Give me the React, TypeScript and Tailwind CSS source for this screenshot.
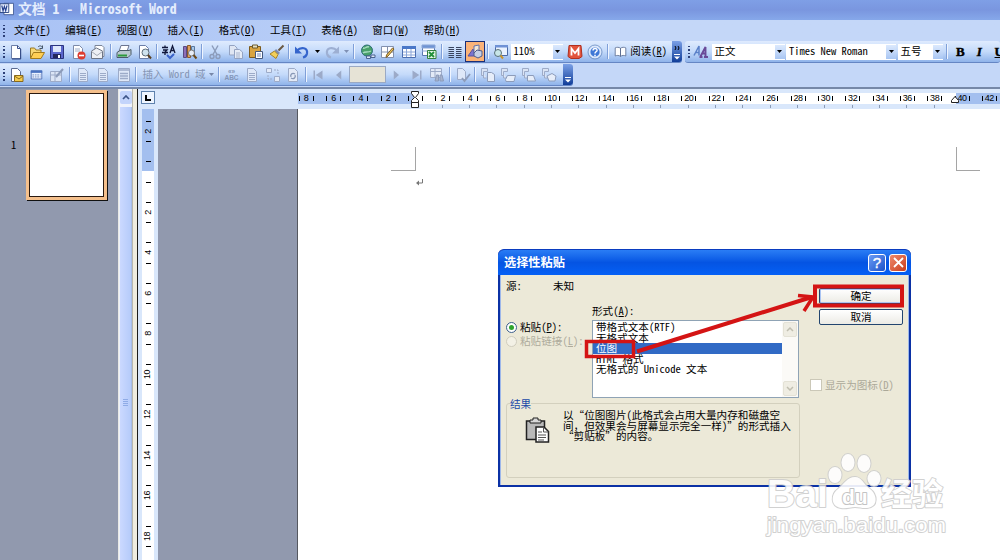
import React from 'react';
import { clsx } from 'clsx';

type IconProps = { children: React.ReactNode; size?: number; className?: string };

function Icon({ children, size = 16, className }: IconProps) {
  return (
    <svg
      width={size}
      height={size}
      viewBox="0 0 16 16"
      fill="none"
      className={clsx('shrink-0', className)}
    >
      {children}
    </svg>
  );
}

// Latin runs use the half-width forms; "_X" marks an access key
function Text({ value, className }: { value: string; className?: string }) {
  const runs = value.match(/[\x20-\x7e]+|[^\x20-\x7e]+/g) ?? [];
  return (
    <span className={clsx('whitespace-pre', className)}>
      {runs.map((run, i) => {
        if (run.charCodeAt(0) > 0x7e) return <span key={i}>{run}</span>;
        const [before, after] = run.split('_');
        return (
          <span key={i} className="[font-feature-settings:'hwid']">
            {before}
            {after && (
              <>
                <span className="underline underline-offset-1">{after[0]}</span>
                {after.slice(1)}
              </>
            )}
          </span>
        );
      })}
    </span>
  );
}

const Slot = ({ children }: { children: React.ReactNode }) => (
  <div className="flex w-[20.5px] shrink-0 items-center justify-center">
    {children}
  </div>
);

const Sep = ({ className }: { className?: string }) => (
  <div className={clsx('flex w-[4.75px] shrink-0 justify-center', className)}>
    <div className="h-[15px] w-px bg-[#7f9fd8]" />
    <div className="h-[15px] w-px bg-[#eff5ff]" />
  </div>
);

const Grip = () => (
  <div className="flex w-[6px] shrink-0 flex-col items-end gap-[2px] pr-px">
    {[0, 1, 2, 3].map((n) => (
      <div key={n} className="h-[1.5px] w-[2px] bg-[#2c3f77]" />
    ))}
  </div>
);

const Caret = ({ color = '#000' }: { color?: string }) => (
  <svg width="5" height="3" viewBox="0 0 5 3">
    <path d="M0 0h5L2.5 3z" fill={color} />
  </svg>
);

const EndCap = ({ more }: { more?: boolean }) => (
  <div className="flex h-full w-[10px] shrink-0 flex-col items-center justify-end gap-[4px] rounded-r-[3px] bg-linear-to-b from-[#7ba0e6] to-[#103d99] pb-[2px]">
    {more && (
      <svg width="6" height="4" viewBox="0 0 6 4">
        <path d="M1 0l1 2-1 2M4 0l1 2-1 2" stroke="#000" fill="none" />
      </svg>
    )}
    <svg width="6" height="6" viewBox="0 0 6 6">
      <path d="M0 .5h6" stroke="#fff" />
      <path d="M0 2.5h6l-3 3z" fill="#fff" />
    </svg>
  </div>
);

const PAGE = 'M3.5 1.5h6l3 3v10h-9z';

const NewIcon = () => (
  <Icon>
    <path d={PAGE} fill="#fff" stroke="#6d7fa8" />
    <path d="M9.5 1.5v3h3" stroke="#39508c" />
    <path d="M12.7 5v10H4" stroke="#2b4380" />
  </Icon>
);

const OpenIcon = () => (
  <Icon>
    <path d="M1.5 14V4h4l1.5 2h5v3" fill="#f7d774" stroke="#9a7a25" />
    <path d="M1.5 14.5l3-6h11l-3.5 6z" fill="#ffcf55" stroke="#a27a1a" />
    <path d="M9 3c2-2 4-1 4.5 1M13.5 1.5v3h-3" stroke="#456" />
  </Icon>
);

const SaveIcon = () => (
  <Icon>
    <path d="M1.5 1.5h13v13h-13z" fill="#5a66cc" stroke="#2b347f" />
    <path d="M4 2h8v6H4z" fill="#dfe8fb" />
    <path d="M4 10h8v4H4z" fill="#23275c" />
    <path d="M9 11h2v3H9z" fill="#fff" />
  </Icon>
);

const PermissionIcon = () => (
  <Icon>
    <path d={PAGE} fill="#fff" stroke="#7d8aa8" />
    <path d="M5 5h5M5 7h5" stroke="#a0aec8" />
    <circle cx="11.5" cy="11.5" r="4" fill="#dc3c32" />
    <path d="M9 11.5h5" stroke="#fff" strokeWidth="1.6" />
  </Icon>
);

const MailIcon = () => (
  <Icon>
    <path d="M5 1.5h7l2 2v9H5z" fill="#fff" stroke="#7b8598" />
    <path d="M1.5 7l5-3 6 3v7.5h-11z" fill="#eef0f4" stroke="#6e7686" />
    <path d="M1.5 7.5l5.5 4 5.5-4" stroke="#a4aab5" />
  </Icon>
);

const PrintIcon = () => (
  <Icon>
    <path d="M5 1.5h8l-2 6H3z" fill="#fff" stroke="#6b7590" />
    <path d="M1 8.5l3-2h9l2-1v5l-3 3H1z" fill="#b9c8cf" stroke="#4a5a66" />
    <path d="M2 11.5h9" stroke="#2c9a3c" strokeWidth="2" />
  </Icon>
);

const PreviewIcon = () => (
  <Icon>
    <path d={PAGE} fill="#fff" stroke="#6b7ea8" />
    <circle cx="9.5" cy="8.5" r="3.5" fill="#cfe3ee" stroke="#5e6d7a" />
    <path d="M12 11l3 3.5" stroke="#5b4020" strokeWidth="2" />
  </Icon>
);

const SpellIcon = () => (
  <Icon>
    <path
      d="M1 3.5h6M4 1.5v2M2 6h4L4 8M1 8.5h6M4 8v3M9 9l2.5-7L14 9M10 6.5h3"
      stroke="#10173a"
      strokeWidth="1.3"
    />
    <path d="M6 11l3 3 4-4" stroke="#3a62c8" strokeWidth="2" />
  </Icon>
);

const ResearchIcon = () => (
  <Icon>
    <path d="M1.5 2.5h3v11h-3z" fill="#8d6fb8" stroke="#5a4a80" />
    <path d="M5.5 1.5h3v12h-3z" fill="#e2a05a" stroke="#8a5a2a" />
    <path d="M9.5 2.5h3v8h-3z" fill="#a9c9ea" stroke="#5878a0" />
    <circle cx="9.5" cy="9" r="3" fill="#e8eef8" stroke="#777" />
    <path d="M11.5 11l3 3.5" stroke="#6b4a18" strokeWidth="2" />
  </Icon>
);

const CutIcon = () => (
  <Icon>
    <path d="M5 1.5l5 9M11 1.5l-5 9" stroke="#8b9bb9" strokeWidth="1.4" />
    <circle cx="5" cy="12.5" r="2" stroke="#8b9bb9" strokeWidth="1.4" />
    <circle cx="11" cy="12.5" r="2" stroke="#8b9bb9" strokeWidth="1.4" />
  </Icon>
);

const CopyIcon = () => (
  <Icon>
    <path d="M1.5 1.5h5l2.5 2.5v7h-7.5z" fill="#dfe6f3" stroke="#94a3c2" />
    <path d="M6.5 5.5h5l3 2.5v6.5h-8z" fill="#e6ecf7" stroke="#94a3c2" />
    <path d="M8 9h4M8 11h4M8 13h4" stroke="#a7b3cc" />
  </Icon>
);

const PasteIcon = () => (
  <Icon>
    <path d="M1.5 2.5h11v11h-11z" fill="#d9a441" stroke="#7c5a1c" />
    <path d="M4.5 1h5v3h-5z" fill="#e8e0c0" stroke="#6b5a2c" />
    <path d="M7.5 7.5h7v7h-7z" fill="#fff" stroke="#44597e" />
    <path d="M9 10h4M9 12h4" stroke="#7088b8" />
  </Icon>
);

const BrushIcon = () => (
  <Icon>
    <path d="M14.5 1.5l-5 5" stroke="#6b5840" strokeWidth="2" />
    <path d="M7 5l4 4-2 1.5L5.5 7z" fill="#7e8ab0" />
    <path d="M5.5 7L9 10.5 7 14.5 1 10z" fill="#f3cf58" stroke="#a5832a" />
  </Icon>
);

const UndoIcon = ({ color }: { color: string }) => (
  <Icon>
    <path d="M3 6.5c4-4 11-3 10 3-.4 2-2 3.5-4 4" stroke={color} strokeWidth="2.2" />
    <path d="M1 2.5v7h7z" fill={color} />
  </Icon>
);

const LinkIcon = () => (
  <Icon>
    <circle cx="7" cy="6.5" r="5.5" fill="#49a069" stroke="#2d6e78" />
    <path d="M3 4c3 1 3-2 6-1M3 9c2-2 5 0 8-2" stroke="#a5dcc0" strokeWidth="1.5" />
    <path d="M6.5 12h4v2.5h-4zM11 11h4v2.5h-4z" fill="#dce6f6" stroke="#4b638f" />
  </Icon>
);

const BorderIcon = () => (
  <Icon>
    <path d="M1.5 2.5h12v11h-12zM7.5 2.5v11M1.5 8h12" fill="#fff" stroke="#8391ad" />
    <path d="M14 5l-6 7-2 1.5.5-2.5 6-7z" fill="#f0c75e" stroke="#7c5c25" />
  </Icon>
);

const TableIcon = () => (
  <Icon>
    <path d="M1.5 2.5h13v11h-13z" fill="#fff" stroke="#4d6fb0" />
    <path d="M1 2h14v3H1z" fill="#4a78c8" />
    <path d="M5.5 5v8M10 5v8M2 8h12M2 11h12" stroke="#8ba6d8" />
  </Icon>
);

const ExcelIcon = () => (
  <Icon>
    <path d="M1.5 1.5h12v10h-12z" fill="#fff" stroke="#5b78b0" />
    <path d="M1 1h13v3H1zM1 7h12" fill="#6f94d4" stroke="#8ba6d8" />
    <path d="M6.5 6.5H15v8H6.5z" fill="#e5f5e5" stroke="#34803e" />
    <path d="M8 8l5 5M13 8l-5 5" stroke="#23903a" strokeWidth="1.8" />
  </Icon>
);

const ColumnsIcon = () => (
  <Icon>
    <path
      d="M1.5 3.5H7M1.5 5.5H7M1.5 7.5H7M1.5 9.5H7M1.5 11.5H7M1.5 13.5H7M9 3.5h5.5M9 5.5h5.5M9 7.5h5.5M9 9.5h5.5M9 11.5h5.5M9 13.5h5.5"
      stroke="#39445e"
      strokeWidth="1.2"
    />
  </Icon>
);

const DrawIcon = () => (
  <Icon>
    <path d="M1 12l5-7 2 7z" fill="#7b74d0" stroke="#5953a0" />
    <path d="M7 2l5-1v7l-5 1z" fill="#f4e7d6" stroke="#6073ac" />
    <path d="M7 9l3-3 5 1v5l-4 2-4-2z" fill="#c5cfe6" stroke="#4e5d8c" />
  </Icon>
);

const MapIcon = () => (
  <Icon>
    <path d="M3.5 1.5h12v10h-12z" fill="#eaf2ff" stroke="#4c6aa4" />
    <path d="M3 1h13v2.5H3z" fill="#6f92d6" />
    <circle cx="6" cy="9" r="3.5" fill="#c8e6e8" stroke="#587078" />
    <path d="M8.5 11.5l2.5 3" stroke="#c9952c" strokeWidth="2" />
  </Icon>
);

const MathIcon = () => (
  <Icon>
    <path d="M2 1.5h12l1 11-3 2H4l-3-2z" fill="#e2533c" stroke="#b03020" />
    <path d="M4.5 11.5v-7L8 9l3.5-4.5v7" stroke="#fff" strokeWidth="1.8" />
  </Icon>
);

const HelpIcon = () => (
  <Icon>
    <circle cx="8" cy="8" r="5.5" fill="#3f78d6" stroke="#dce8fb" strokeWidth="1.8" />
    <circle cx="8" cy="8" r="7" stroke="#5b7fb8" strokeWidth=".7" />
    <path d="M6 6.5c0-3 4.5-2.500 4 0-.3 1.300-2 1.300-2 3M8 10.700v1.600" stroke="#fff" strokeWidth="1.5" />
  </Icon>
);

const BookIcon = () => (
  <Icon size={13}>
    <path
      d="M1.5 3.5c2-1 4.500-1 6.500.5v10c-2-1.500-4.500-1.500-6.500-.5zM14.500 3.500c-2-1-4.500-1-6.500.5v10c2-1.500 4.500-1.500 6.500-.5z"
      fill="#fff"
      stroke="#596a8e"
    />
  </Icon>
);

const StylesIcon = () => (
  <Icon>
    <path d="M1 11.5L6 2v9.500M3 8.500h3" stroke="#5a80c8" strokeWidth="1.5" />
    <path d="M7.5 12.5L12.500 3v10M9.500 9.500h3M6.500 13h3M11 13h4" stroke="#6a4a98" strokeWidth="1.9" />
  </Icon>
);

const MergeMainIcon = () => (
  <Icon>
    <path d={PAGE} fill="#fff" stroke="#5a6a90" />
    <path d="M6.5 8.5H15v6H6.5z" fill="#f6cd4e" stroke="#8a6a1c" />
    <path d="M6.5 9l4.500 3 4-3" stroke="#8a6a1c" />
  </Icon>
);

const SourceIcon = () => (
  <Icon size={13}>
    <path d="M1.5 3.5h13v10h-13z" fill="#eaf1ff" stroke="#4868ac" />
    <path d="M1 3h14v3H1z" fill="#4a72c0" />
    <path d="M3 8.5h10M3 11h10" stroke="#5a78b0" strokeDasharray="2 1" />
  </Icon>
);

const GRAY = '#9dabc8';

const GrayEditIcon = () => (
  <Icon>
    <path d="M1.5 4.5h11v10h-11zM2 8h10M6 5v9" fill="#dce5f5" stroke={GRAY} />
    <path d="M14 2L7 10" stroke="#8c9bb9" strokeWidth="2" />
  </Icon>
);

const GrayDocIcon = () => (
  <Icon>
    <path d={PAGE} fill="#dfe8f8" stroke={GRAY} />
    <path d="M5 6.5h6M5 8.5h6M5 10.5h6M5 12.5h6" stroke={GRAY} />
  </Icon>
);

const GrayListIcon = () => (
  <Icon>
    <path d="M2.5 1.5h11v13h-11z" fill="#dfe8f8" stroke={GRAY} />
    <path d="M3 3h10M4 6.5h8M4 9h8M4 11.5h8" stroke={GRAY} strokeWidth="1.3" />
  </Icon>
);

const FieldCodeIcon = () => (
  <div className="flex flex-col items-center font-['Liberation_Sans',sans-serif] text-[6.5px] leading-[6px] font-bold text-[#8496b8]">
    <span>«»</span>
    <span>ABC</span>
  </div>
);

const GrayNodesIcon = () => (
  <Icon>
    <path d="M1.5 1.5h5v4h-5zM9.5 9.5h5v5h-5z" fill="#e3eaf7" stroke={GRAY} />
    <path d="M9 3h4v4M3 8v4h4" stroke={GRAY} strokeDasharray="2 1" />
  </Icon>
);

const GrayRefreshIcon = () => (
  <Icon>
    <path d={PAGE} fill="#e3eaf7" stroke={GRAY} />
    <path d="M10 7c-3-2-5 1-4 3M6 11c3 2 5-1 4-3" stroke="#8797b5" strokeWidth="1.3" />
  </Icon>
);

const GrayFindIcon = () => (
  <Icon>
    <path d="M1.5 1.5h11v9h-11zM1 4.5h11M6 2v8" fill="#e3eaf7" stroke={GRAY} />
    <path d="M6 14l1.500-6h2v6zM11 14V8h2l1.500 6z" fill="#a6b3cd" stroke="#8b9aba" />
  </Icon>
);

const GrayCheckIcon = () => (
  <Icon>
    <path d="M2.5 1.5h5l3 3v8h-8z" fill="#dfe8f8" stroke={GRAY} />
    <path d="M7 11l2.500 3L15 7" stroke="#8d9cba" strokeWidth="1.8" />
  </Icon>
);

const GrayMergeIcon = ({ d }: { d: string }) => (
  <Icon>
    <path d="M1.5 1.5h6v3h-4v4h-2zM3.5 5v6h3" fill="#dbe4f4" stroke={GRAY} />
    <path d={d} fill="#e6edf9" stroke="#8d9cba" />
  </Icon>
);

const Triangle = ({ d }: { d: string }) => (
  <Icon size={12}>
    <path d={d} fill="#9caac8" />
  </Icon>
);

function Combo({ value, className }: { value: string; className: string }) {
  return (
    <div
      className={clsx(
        'flex h-[16px] shrink-0 items-center justify-between bg-white pl-[3px]',
        className
      )}
    >
      <Text value={value} className="pb-px" />
      <div className="flex h-[14px] w-[10px] items-center justify-center bg-linear-to-b from-[#dce9fd] to-[#a9c6f3]">
        <Caret />
      </div>
    </div>
  );
}

const BAR =
  'flex h-[22px] items-center bg-linear-to-b from-[#dfebfe] via-[#c4dafa] to-[#8fb3ea] border-b border-[#6586c4] rounded-r-[3px]';

const MENUS = [
  '文件(_F)',
  '编辑(_E)',
  '视图(_V)',
  '插入(_I)',
  '格式(_O)',
  '工具(_T)',
  '表格(_A)',
  '窗口(_W)',
  '帮助(_H)',
];

function StandardBar() {
  return (
    <div className={clsx(BAR, 'w-[682px] shrink-0')}>
      <Grip />
      {[NewIcon, OpenIcon, SaveIcon, PermissionIcon, MailIcon].map((I, n) => (
        <Slot key={n}><I /></Slot>
      ))}
      <Sep />
      <Slot><PrintIcon /></Slot>
      <Slot><PreviewIcon /></Slot>
      <Sep />
      <Slot><SpellIcon /></Slot>
      <Slot><ResearchIcon /></Slot>
      <Sep />
      {[CutIcon, CopyIcon, PasteIcon, BrushIcon].map((I, n) => (
        <Slot key={n}><I /></Slot>
      ))}
      <Sep />
      <Slot><UndoIcon color="#3565cc" /></Slot>
      <div className="flex w-[10px] shrink-0 justify-center"><Caret /></div>
      <Slot>
        <div className="-scale-x-100"><UndoIcon color="#9dafd2" /></div>
      </Slot>
      <div className="flex w-[8px] shrink-0 justify-center"><Caret color="#7f90b4" /></div>
      <Sep className="w-[7px]" />
      {[LinkIcon, BorderIcon, TableIcon, ExcelIcon].map((I, n) => (
        <Slot key={n}><I /></Slot>
      ))}
      <Sep />
      <Slot><ColumnsIcon /></Slot>
      <div className="flex size-[20.5px] shrink-0 items-center justify-center border border-[#1a2f78] bg-[#fbb378]">
        <DrawIcon />
      </div>
      <Sep />
      <Slot><MapIcon /></Slot>
      <Combo value="110%" className="w-[52px]" />
      <div className="w-[2px] shrink-0" />
      <Slot><MathIcon /></Slot>
      <Slot><HelpIcon /></Slot>
      <Sep />
      <div className="flex w-[62px] items-center gap-[3px] pl-[4px]">
        <BookIcon />
        <Text value="阅读(_R)" />
      </div>
      <div className="ml-auto h-full"><EndCap more /></div>
    </div>
  );
}

function FormatBar() {
  return (
    <div className={clsx(BAR, 'ml-[3px] min-w-0 flex-1 overflow-hidden rounded-l-[3px]')}>
      <Grip />
      <Slot><StylesIcon /></Slot>
      <Combo value="正文" className="w-[73px]" />
      <Combo value="Times New Roman" className="ml-[1.5px] w-[110px]" />
      <Combo value="五号" className="ml-[1.5px] w-[45px]" />
      <Sep className="mx-[2px]" />
      <div className="flex font-['Liberation_Serif',serif] text-[13px] [-webkit-text-stroke:0.4px_#000]">
        <span className="w-[18px] shrink-0 text-center font-bold">B</span>
        <span className="w-[20px] shrink-0 text-center font-bold italic">I</span>
        <span className="w-[20px] shrink-0 text-center font-bold underline">U</span>
      </div>
    </div>
  );
}

function MergeBar() {
  return (
    <div className={clsx(BAR, 'w-[573px]')}>
      <Grip />
      <Slot><MergeMainIcon /></Slot>
      <Slot><SourceIcon /></Slot>
      <Slot><GrayEditIcon /></Slot>
      <Sep />
      <Slot><GrayDocIcon /></Slot>
      <Slot><GrayDocIcon /></Slot>
      <Slot><GrayListIcon /></Slot>
      <Sep />
      <div className="flex w-[78px] shrink-0 items-center gap-[3px] pl-[4px] text-[#8494b3]">
        <Text value="插入 Word 域" />
        <Caret color="#7787a8" />
      </div>
      <Sep />
      <Slot><FieldCodeIcon /></Slot>
      <Slot><GrayDocIcon /></Slot>
      <Slot><GrayNodesIcon /></Slot>
      <Slot><GrayRefreshIcon /></Slot>
      <Sep />
      <Slot><Triangle d="M2 2h2v12H2zM14 2v12L5 8z" /></Slot>
      <Slot><Triangle d="M11 2v12L4 8z" /></Slot>
      <div className="h-[17px] w-[37px] shrink-0 border border-[#9aa9c4] bg-[#e6e3d6]" />
      <Slot><Triangle d="M5 2v12l7-6z" /></Slot>
      <Slot><Triangle d="M12 2h2v12h-2zM2 2v12l9-6z" /></Slot>
      <Slot><GrayFindIcon /></Slot>
      <Sep />
      <Slot><GrayCheckIcon /></Slot>
      <Sep />
      <Slot><GrayMergeIcon d="M7.5 5.5h4l3 2v7h-7z" /></Slot>
      <Slot><GrayMergeIcon d="M5.5 12.5l2-4h8l-1.500 6H6z" /></Slot>
      <Slot><GrayMergeIcon d="M6.5 8.5h6l2 5.500h-8z" /></Slot>
      <Slot><GrayMergeIcon d="M6 9l5-2.500 4 2.500-1 5H8z" /></Slot>
      <div className="ml-auto h-full"><EndCap /></div>
    </div>
  );
}

const H_LABELS = [8, 6, 4, 2, 0, ...Array.from({ length: 21 }, (_, i) => 2 * i + 2)];
const V_LABELS = [2, 0, 2, 4, 6, 8, 10, 12, 14, 16, 18];

function HorizontalRuler() {
  return (
    <div className="relative h-[20px] overflow-hidden bg-[#d9e7fb] pt-[4px]">
      <div className="h-[11px] bg-[linear-gradient(to_right,#a3bfef_0_117px,#fff_117px_658px,#a3bfef_658px)]">
        <div className="-ml-[5.5px] flex h-[11px] items-center font-['Liberation_Sans',sans-serif] text-[9px] leading-none">
          {H_LABELS.map((n, i) => (
            <div
              key={i}
              className="flex w-[27.34px] shrink-0 items-center justify-center"
            >
              <div className="flex w-[15px] items-center justify-between">
                <div className="h-[5px] w-px shrink-0 bg-black" />
                <span className="-mx-1 tracking-[-0.4px]">{n || ''}</span>
                <div className="h-[5px] w-px shrink-0 bg-black" />
              </div>
            </div>
          ))}
        </div>
      </div>
      <div className="flex h-[5px] items-center pl-[131px]">
        {H_LABELS.slice(5, 24).map((n) => (
          <div key={n} className="flex w-[27.34px] shrink-0 justify-center pr-px">
            <div className="h-[3px] w-px bg-[#8b9bb5]" />
          </div>
        ))}
      </div>
      {/* Indent markers */}
      <svg className="absolute top-px left-[112px]" width="11" height="19" viewBox="0 0 11 19">
        <path d="M1.5 1.5h7v2l-3 4 3 3v2h-7v-2l3-3-3-4zM1.5 12.5h7v5h-7z" fill="#fff" stroke="#222" />
      </svg>
      <svg className="absolute top-[6px] left-[652px]" width="10" height="9" viewBox="0 0 10 9">
        <path d="M1.5 7.5v-2l3.500-4 3.500 4v2z" fill="#fff" stroke="#222" />
      </svg>
    </div>
  );
}

function VerticalRuler() {
  return (
    <div className="flex w-[20px] shrink-0 flex-col items-center bg-[#d9e7fb] pt-[2px]">
      <div className="mb-[5px] flex h-[13px] w-[14px] shrink-0 items-center justify-center border border-[#5f82ad] bg-[#eef5ff]">
        <svg width="6" height="6" viewBox="0 0 6 6">
          <path d="M1 0v5h5" stroke="#000" strokeWidth="2" fill="none" />
        </svg>
      </div>
      <div className="min-h-0 w-[12px] flex-1 overflow-hidden bg-[linear-gradient(to_bottom,#a3bfef_0_62px,#fff_62px)] pt-[2px] font-['Liberation_Sans',sans-serif] text-[9px] leading-none">
        {V_LABELS.map((n, i) => (
          <div key={i} className="flex h-[40.5px] flex-col items-center justify-center">
            <div className="flex h-[21.5px] flex-col items-center justify-between">
              <div className="h-px w-[5px] bg-black" />
              <span className="-rotate-90 tracking-[-0.4px]">{n || ''}</span>
              <div className="h-px w-[5px] bg-black" />
            </div>
          </div>
        ))}
      </div>
    </div>
  );
}

function ThumbnailPane() {
  return (
    <div className="flex w-[118px] shrink-0 bg-[#9199ae] pt-[1px]">
      <div className="w-[26px] pt-[50px] pl-[11px]">
        <Text value="1" />
      </div>
      <div className="h-[110px] w-[81px] bg-[#f5c08c] p-[3px] shadow-[1px_1px_0_#111]">
        <div className="h-full border border-[#2a1a10] bg-white" />
      </div>
    </div>
  );
}

function PaneScrollbar() {
  return (
    <>
      <div className="flex w-[14px] shrink-0 flex-col items-center border-l border-[#e9e9e6] bg-[#eef2fc]">
        <div className="mt-[2px] flex h-[13px] w-[12px] shrink-0 items-center justify-center rounded-[2px] bg-[#c3d4fb]">
          <svg width="8" height="5" viewBox="0 0 8 5">
            <path d="M1 4l3-3 3 3" stroke="#3c5488" strokeWidth="1.7" fill="none" />
          </svg>
        </div>
        <div className="mt-[3px] flex w-[12px] flex-1 flex-col items-center gap-px border-r border-[#a6bce8] bg-linear-to-r from-[#cbd9ff] to-[#b5cbfa] pt-[292px]">
          {[0, 1, 2, 3].map((n) => (
            <div key={n} className="h-px w-[5px] bg-[#8fabe6]" />
          ))}
        </div>
      </div>
      <div className="w-[5px] shrink-0 border-l border-[#b9b8ae] bg-[#efecdf]" />
      <div className="w-px shrink-0 bg-[#1b1b1b]" />
    </>
  );
}

function Page() {
  return (
    <div className="flex flex-1 border-l border-[#55585f] bg-white">
      <div className="flex w-full items-start justify-between pt-[38px] pr-[20px] pl-[93px]">
        <div className="flex flex-col">
          <div className="h-[24px] w-[25px] border-r border-b border-[#a5a5a5]" />
          <svg className="mt-[8px] ml-[25px]" width="8" height="7" viewBox="0 0 8 7">
            <path d="M6.5 0v4H2" stroke="#777" fill="none" />
            <path d="M0 4l3-2.500v5z" fill="#777" />
          </svg>
        </div>
        <div className="h-[24px] w-[24px] border-b border-l border-[#a5a5a5]" />
      </div>
    </div>
  );
}

const FORMATS = ['带格式文本(RTF)', '无格式文本', '位图', 'HTML 格式', '无格式的 Unicode 文本'];

function ScrollArrow({ down }: { down?: boolean }) {
  return (
    <div className="flex h-[15px] w-[14px] items-center justify-center rounded-[2px] border border-[#e4e2d6] bg-[#efede3]">
      <svg width="8" height="5" viewBox="0 0 8 5" className={clsx(down && 'rotate-180')}>
        <path d="M1 4l3-3 3 3" stroke="#c0beb0" strokeWidth="1.5" fill="none" />
      </svg>
    </div>
  );
}

function DialogButton({ label, active }: { label: string; active?: boolean }) {
  return (
    <button
      className={clsx(
        'flex h-[16px] w-[84px] items-center justify-center rounded-[2px] border border-[#22456f] bg-linear-to-b from-white to-[#ecebe5]',
        active && 'shadow-[inset_0_0_0_1px_#a9c4f3]'
      )}
    >
      <Text value={label} />
    </button>
  );
}

function ClipboardIcon() {
  return (
    <svg width="25" height="27" viewBox="0 0 25 27" fill="none">
      <path d="M1.5 4h18v18.500h-18z" fill="#b9b9b9" stroke="#222" strokeWidth="1.5" />
      <path d="M5 6V3h3V1h5v2h3v3z" fill="#d8d8d8" stroke="#222" />
      <path d="M11 10h8l4.500 4.500V25H11z" fill="#fff" stroke="#222" strokeWidth="1.5" />
      <path d="M18.5 10v5h5M13 15h4M13 18h8M13 20.500h8M13 23h6" stroke="#555" />
    </svg>
  );
}

function PasteSpecialDialog() {
  return (
    <div className="absolute top-[249px] left-[498px] flex h-[238px] w-[413px] flex-col rounded-t-[6px] border-t border-[#0a3cc0] bg-[#0b31a5]">
      <div className="flex h-[25px] shrink-0 items-center gap-[2px] rounded-t-[6px] bg-linear-to-b from-[#2a7df5] via-[#0554e3] to-[#0560f5] pr-[4px] pl-[6px] text-white">
        <Text value="选择性粘贴" className="flex-1 text-[12.2px] font-bold" />
        <div className="flex size-[18px] items-center justify-center rounded-[3px] border border-white bg-linear-to-br from-[#6b9cf5] to-[#1c50c8] font-['Liberation_Sans',sans-serif] text-[15px] leading-none [-webkit-text-stroke:0.4px_#fff]">
          ?
        </div>
        <div className="ml-px flex size-[18px] items-center justify-center rounded-[3px] border border-white bg-linear-to-br from-[#ee8a6c] to-[#c93a16]">
          <svg width="11" height="11" viewBox="0 0 11 11">
            <path d="M1 1l9 9M10 1l-9 9" stroke="#fff" strokeWidth="1.8" />
          </svg>
        </div>
      </div>

      <div className="mx-[2px] mb-[2px] flex flex-1 border-x border-[#9db7ea] bg-[#ece9d8] text-[10.6px] leading-[12px]">
        <div className="flex w-[298px] flex-col pl-[5px]">
          <div className="flex h-[17px] items-end">
            <Text value="源:" className="w-[47px]" />
            <Text value="未知" />
          </div>
          <div className="flex h-[105px] pt-[13px]">
            <div className="flex w-[86px] flex-col pt-[15px]">
              <div className="flex h-[14px] items-center gap-[3px]">
                <div className="flex size-[11px] shrink-0 items-center justify-center rounded-full border border-[#3c5f8c] bg-white">
                  <div className="size-[5px] rounded-full bg-[#2fa52f]" />
                </div>
                <Text value="粘贴(_P):" />
              </div>
              <div className="flex h-[14px] items-center gap-[3px] text-[#aeab9c]">
                <div className="size-[11px] shrink-0 rounded-full border border-[#d0cdbe] bg-[#f3f1e6]" />
                <Text value="粘贴链接(_L):" />
              </div>
            </div>
            <div>
              <div className="flex h-[15px] items-start">
                <Text value="形式(_A):" />
              </div>
              <div className="flex h-[78px] w-[207px] border border-[#8fa3b5] bg-white">
                <div className="flex-1 pt-px leading-[10.5px]">
                  {FORMATS.map((format, i) => (
                    <div
                      key={format}
                      className={clsx('flex h-[10.5px] items-center pl-[3px]', {
                        'bg-[#316ac5] text-white': i === 2,
                      })}
                    >
                      <Text value={format} />
                    </div>
                  ))}
                </div>
                <div className="flex w-[16px] flex-col items-center justify-between bg-[#fbfaf7] py-px">
                  <ScrollArrow />
                  <ScrollArrow down />
                </div>
              </div>
            </div>
          </div>

          <fieldset className="h-[81px] w-[294px] rounded-[3px] border border-[#d3d0be] pl-[3px]">
            <legend className="flex h-[13px] items-center text-[#1a4aa8]">
              <Text value="结果" />
            </legend>
            <div className="flex pl-[15px]">
              <div className="pt-[7px]"><ClipboardIcon /></div>
              <div className="flex flex-col pl-[13px] leading-[10.5px]">
                <Text value="以“位图图片(此格式会占用大量内存和磁盘空" />
                <Text value="间，但效果会与屏幕显示完全一样)”的形式插入" />
                <Text value="“剪贴板”的内容。" />
              </div>
            </div>
          </fieldset>
        </div>

        <div className="flex flex-1 flex-col pt-[13px] pl-[8px]">
          <div className="flex flex-col gap-[5px] pl-[12px]">
            <DialogButton label="确定" active />
            <DialogButton label="取消" />
          </div>
          <div className="flex items-center gap-[3px] pt-[54px] pl-[3px] text-[#aba898]">
            <div className="size-[12px] shrink-0 border border-[#cbc8b8] bg-white" />
            <Text value="显示为图标(_D)" />
          </div>
        </div>
      </div>
    </div>
  );
}

function Annotations() {
  return (
    <svg className="absolute top-0 left-0" width="1000" height="560" fill="none" stroke="#d41414">
      <rect x="586.5" y="341.5" width="47" height="15" strokeWidth="3.5" />
      <rect x="815" y="286.5" width="87" height="19" strokeWidth="4" />
      <path d="M637 351.5L812 297" strokeWidth="4" />
      <path d="M798 295.5l15 1.500-9 14" strokeWidth="3.5" />
    </svg>
  );
}

function Watermark() {
  return (
    <svg className="absolute top-[448px] left-[758px]" width="200" height="100">
      <g
        fill="#fff"
        stroke="#cdcdcd"
        strokeWidth="2"
        strokeLinejoin="round"
        opacity="0.9"
        className="font-['Liberation_Sans',sans-serif] [paint-order:stroke]"
      >
        <ellipse cx="77" cy="27" rx="6.5" ry="8" />
        <ellipse cx="90" cy="14.5" rx="6.5" ry="8.5" />
        <ellipse cx="106" cy="15.5" rx="6.5" ry="8.5" />
        <ellipse cx="116" cy="30.5" rx="6.5" ry="7.5" />
        <path d="M97 29c7 0 9 8 15 12 7 5 9 18-3 19-5 .5-7-1-12-1s-9 2-14 1c-11-2-10-14-3-19 6-5 9-12 17-12z" />
        <text x="9" y="59" fontSize="38" fontWeight="700" textLength="61" lengthAdjust="spacingAndGlyphs">
          Bai
        </text>
        <text x="84" y="56" fontSize="21" fontWeight="700" stroke="#bdbdbd">
          du
        </text>
        <text x="123" y="57" fontSize="31" fontWeight="700" className="font-['Noto_Sans_CJK_SC',sans-serif]">
          经验
        </text>
        <text x="9" y="84" fontSize="21" textLength="179" lengthAdjust="spacingAndGlyphs">
          jingyan.baidu.com
        </text>
      </g>
    </svg>
  );
}

export default function App() {
  return (
    <div className="relative flex h-[560px] w-[1000px] flex-col overflow-hidden bg-[#c4d7f8] font-['Noto_Sans_CJK_SC',sans-serif] text-[10.5px] leading-none text-black">
      <header className="flex h-[20px] shrink-0 items-center gap-[4px] bg-linear-to-b from-[#7f9fe6] via-[#7a96df] to-[#86a8ea] pb-[3px] text-[#e4edfd]">
        <Icon size={14}>
          <path d="M4.5 1.5h11v13h-11z" fill="#fff" stroke="#3b5590" />
          <path d="M0 2h10v10H0z" fill="#e9f0ff" stroke="#243f7c" />
          <path d="M2 4l1.500 6L5 5l1.500 5L8 4" stroke="#243f8c" strokeWidth="1.3" />
        </Icon>
        <Text value="文档 1 - Microsoft Word" className="text-[13.8px] font-bold" />
      </header>

      <nav className="flex h-[21px] shrink-0 items-center bg-linear-to-r from-[#a9c2f5] to-[#c4d7f8] to-60%">
        <Grip />
        <div className="flex pl-[8px]">
          {MENUS.map((menu) => (
            <Text key={menu} value={menu} className="w-[51.2px] shrink-0" />
          ))}
        </div>
      </nav>

      <div className="flex h-[23px] shrink-0">
        <StandardBar />
        <FormatBar />
      </div>
      <div className="h-[23px] shrink-0">
        <MergeBar />
      </div>

      <main className="flex min-h-0 flex-1 border-t-2 border-[#7688a8]">
        <ThumbnailPane />
        <PaneScrollbar />
        <VerticalRuler />
        <div className="flex min-w-0 flex-1 flex-col">
          <div className="flex">
            <div className="w-[140px] shrink-0 bg-[#d9e7fb]" />
            <div className="min-w-0 flex-1"><HorizontalRuler /></div>
          </div>
          <div className="flex flex-1">
            <div className="w-[139px] shrink-0 bg-[#9199ae]" />
            <Page />
          </div>
        </div>
      </main>

      <PasteSpecialDialog />
      <Annotations />
      <Watermark />
    </div>
  );
}
